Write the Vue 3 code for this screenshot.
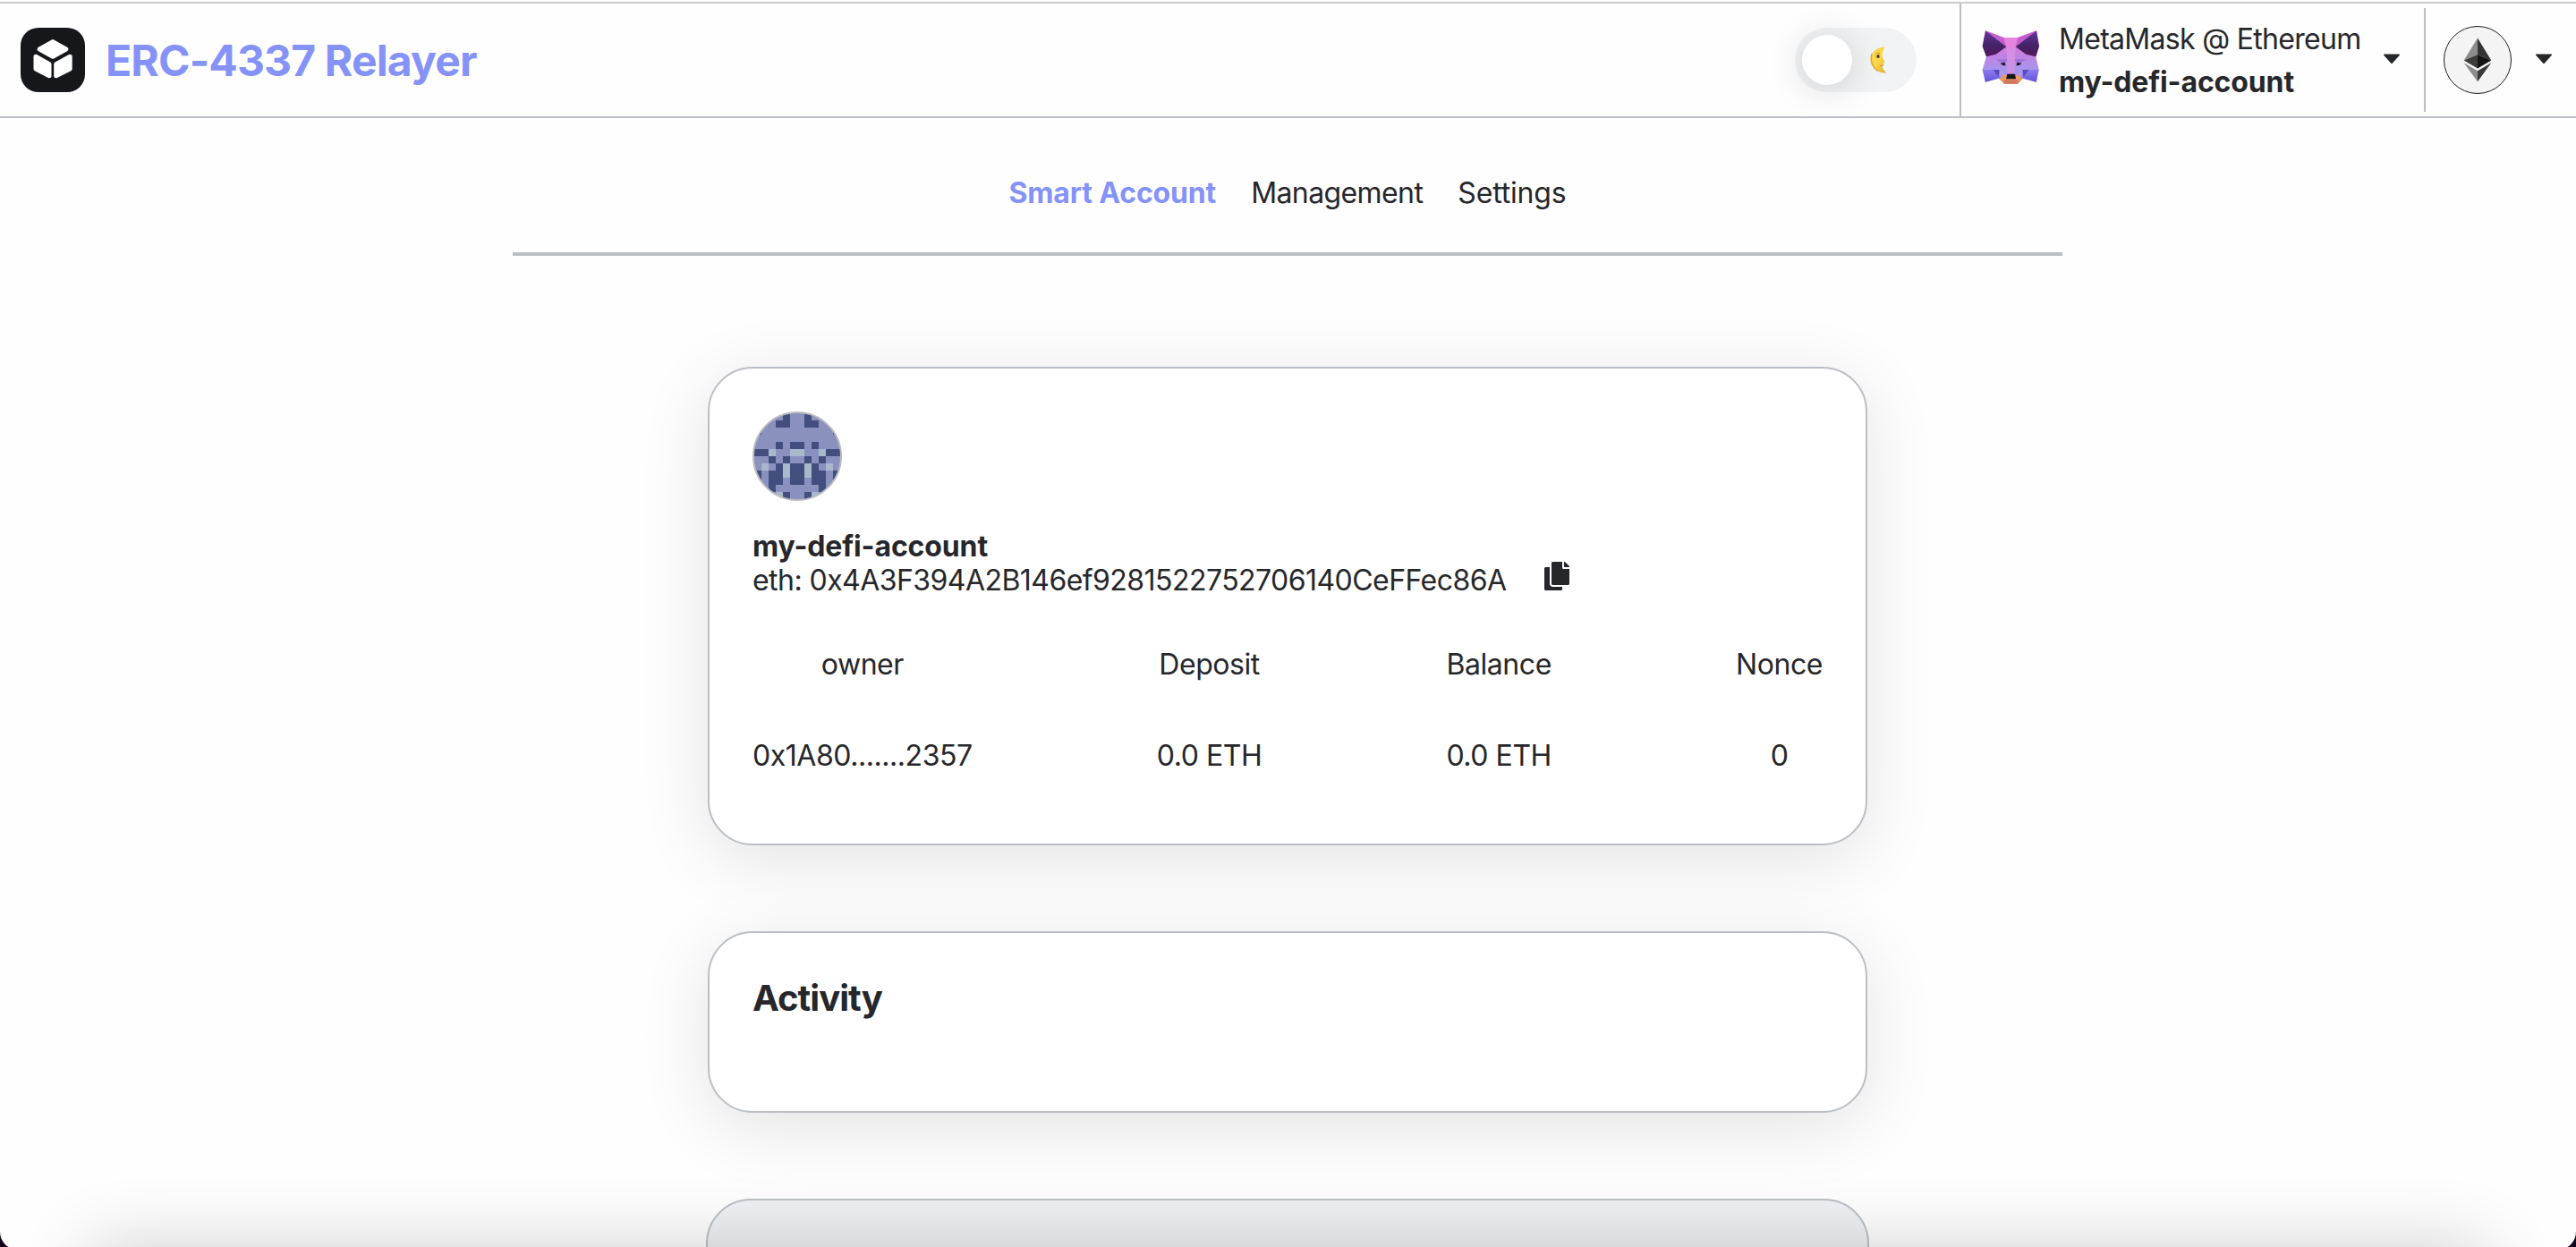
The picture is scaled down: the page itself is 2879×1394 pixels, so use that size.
<script setup>
const tabs = [
  { label: 'Smart Account', key: 'smart' },
  { label: 'Management', key: 'management' },
  { label: 'Settings', key: 'settings' },
]

const stats = [
  { label: 'owner', value: '0x1A80.......2357' },
  { label: 'Deposit', value: '0.0 ETH' },
  { label: 'Balance', value: '0.0 ETH' },
  { label: 'Nonce', value: '0' },
]

// Left half of the identicon; d = dark, l = light, . = base colour
const half = [
  '....d.', '...dd.', 'd.....', '......', '...d.d', 'ddl..l',
  '..d.d.', '.l.dld', 'd.ddld', 'd.dd.d', '..d...', '...ld.',
]
const cells = half.flatMap((row, y) =>
  [...row, ...[...row].reverse()]
    .map((c, x) => ({ c, x, y }))
    .filter((p) => p.c !== '.')
)
</script>

<template>
  <div class="window">
    <div class="page">
      <header class="header">
        <div class="brand">
          <svg class="logo" viewBox="0 0 72 72">
            <rect width="72" height="72" rx="20" fill="#15171a" />
            <g fill="#fff" stroke="#fff" stroke-width="5" stroke-linejoin="round">
              <path d="M36 15.600 L50.800 24 L36 32.200 L21.200 24Z" />
              <path d="M17 32.300 L32 40.800 V53.800 L17 46Z" />
              <path d="M55.200 32.300 L39.700 40.800 V53.800 L55.200 46Z" />
            </g>
          </svg>
          <h1 class="title">ERC-4337 Relayer</h1>
        </div>
        <div class="toggle">
          <span class="knob"></span>
          <svg class="moon" viewBox="0 0 20 30">
            <defs>
              <linearGradient id="moon" x1="0" y1="0" x2="1" y2="1">
                <stop offset="0" stop-color="#f5cf4a" />
                <stop offset=".5" stop-color="#fbd84a" />
                <stop offset="1" stop-color="#d9a534" />
              </linearGradient>
            </defs>
            <path d="M17 .5 C7 .5 .5 7 .5 15 C.5 23.500 8 30 18.500 29.500 C15.500 27.500 13.800 24.500 13.800 22 L15.300 21 L14.700 19.500 L15.200 18 L16.500 17 L14 12.500 C13.500 8 14 4 17 .5Z" fill="url(#moon)" />
            <path d="M2 8 C0 15 2 23 9 27.500" fill="none" stroke="#d3a02f" stroke-width="1.200" />
            <ellipse cx="9" cy="11" rx="1.700" ry="2.100" fill="#4b3512" />
            <path d="M6.500 8 Q8.500 6 11 7.500 M11.500 21.500 Q13 22 14.500 21.200" fill="none" stroke="#b5852a" stroke-width=".9" />
          </svg>
        </div>
        <div class="wallet">
          <svg class="fox" viewBox="45 42 192 180">
            <defs>
              <linearGradient id="face" x1="0" y1="0" x2="0" y2="1">
                <stop offset="0" stop-color="#e97fdc" />
                <stop offset=".45" stop-color="#c281e0" />
                <stop offset=".75" stop-color="#a596ee" />
                <stop offset="1" stop-color="#7a6ae6" />
              </linearGradient>
              <linearGradient id="ear" x1="0" y1="0" x2="0" y2="1">
                <stop offset="0" stop-color="#6b36a0" />
                <stop offset=".55" stop-color="#432368" />
                <stop offset="1" stop-color="#54175a" />
              </linearGradient>
              <linearGradient id="cheek" x1="0" y1="0" x2="0" y2="1">
                <stop offset="0" stop-color="#8f7cf0" />
                <stop offset="1" stop-color="#5f55da" />
              </linearGradient>
            </defs>
            <path d="M57 43 L118 66 H165 L228 43 L237 95 L226 130 L236 173 L227 215 L180 203 L165 221 H120 L103 203 L57 215 L47 173 L60 130 L47 95Z" fill="url(#face)" />
            <path d="M57 43 L118 66 L127 97Z" fill="#c35fd3" />
            <path d="M228 43 L165 66 L158 97Z" fill="#c35fd3" />
            <path d="M118 66 H165 L158 97 L155 140 H130 L127 97Z" fill="#e783dc" />
            <path d="M57 43 L127 97 L92 122 L60 130 L47 95Z" fill="url(#ear)" />
            <path d="M228 43 L158 97 L193 122 L226 130 L237 95Z" fill="url(#ear)" />
            <path d="M130 100 H155 L158 188 H127Z" fill="#cf91e4" opacity=".8" />
            <path d="M92 139 H130 L122 158 Z M193 139 H155 L163 158Z" fill="#a070d8" />
            <path d="M47 174 H86 L104 200 L57 215Z M236 174 H199 L181 200 L227 215Z" fill="url(#cheek)" />
            <path d="M82 174 H104 L101 197Z M203 174 H181 L184 197Z" fill="#5b49bd" />
            <path d="M104 174 L127 188 V206 L108 203Z M181 174 L158 188 V206 L177 203Z" fill="#a99af0" />
            <path d="M118 191 L103 205 L120 221 H165 L182 205 L167 191Z" fill="#ee9b62" />
            <path d="M116 208 H169 L165 221 H120Z" fill="#d17a5f" />
            <path d="M130 188 H156 L159 205 H126Z" fill="#16171a" />
            <path d="M106 153 L121 149 L125 160 L116 159Z M179 153 L164 149 L160 160 L169 159Z" fill="#19151f" />
          </svg>
          <div class="wallet-text">
            <div class="provider">MetaMask @ Ethereum</div>
            <strong class="account-name">my-defi-account</strong>
          </div>
          <svg class="caret" viewBox="0 0 20 12"><path d="M1.500 .5 H18.500 Q19.500 1 18.800 1.800 L11 10.500 Q10 11.500 9 10.500 L1.200 1.800 Q.5 1 1.500 .5Z" /></svg>
        </div>
        <div class="network">
          <svg class="eth" viewBox="0 0 76 76">
            <circle cx="38" cy="38" r="37.500" fill="#f4f4f4" stroke="#1c1c1e" />
            <path d="M38 13.500 L22.700 38.500 L38 32Z" fill="#8c8c8c" />
            <path d="M38 13.500 L53.300 38.500 L38 32Z" fill="#343434" />
            <path d="M22.700 38.500 L38 32 V47.500Z" fill="#3c3c3b" />
            <path d="M53.300 38.500 L38 32 V47.500Z" fill="#141414" />
            <path d="M22.700 41.300 L38 50.300 V62.200Z" fill="#8c8c8c" />
            <path d="M53.300 41.300 L38 50.300 V62.200Z" fill="#393939" />
          </svg>
          <svg class="caret" viewBox="0 0 20 12"><path d="M1.500 .5 H18.500 Q19.500 1 18.800 1.800 L11 10.500 Q10 11.500 9 10.500 L1.200 1.800 Q.5 1 1.500 .5Z" /></svg>
        </div>
      </header>

      <div class="body">
        <nav class="tabs">
          <a v-for="t in tabs" :key="t.key" :class="t.key">{{ t.label }}</a>
        </nav>

        <main class="content">
          <section class="card account">
            <svg class="avatar" viewBox="0 0 100 100">
              <defs><clipPath id="round"><circle cx="50" cy="50" r="49" /></clipPath></defs>
              <g clip-path="url(#round)">
                <rect width="100" height="100" fill="#8a91bf" />
                <rect
                  v-for="p in cells" :key="p.x + '-' + p.y"
                  :x="2 + p.x * 8" :y="2 + p.y * 8" width="8" height="8"
                  :fill="p.c === 'd' ? '#434e7e' : '#a9b8cb'"
                />
              </g>
              <circle cx="50" cy="50" r="49" fill="none" stroke="#b9bcc0" stroke-width="2" />
            </svg>
            <strong class="account-name name">my-defi-account</strong>
            <div class="address">
              <span class="hex">eth: 0x4A3F394A2B146ef9281522752706140CeFFec86A</span>
              <svg class="copy" viewBox="0 0 448 512">
                <path d="M320 448v40c0 13.255-10.745 24-24 24H24c-13.255 0-24-10.745-24-24V120c0-13.255 10.745-24 24-24h72v296c0 30.879 25.121 56 56 56h168zm0-344V0H152c-13.255 0-24 10.745-24 24v368c0 13.255 10.745 24 24 24h272c13.255 0 24-10.745 24-24V128H344c-13.200 0-24-10.800-24-24zm120.971-31.029L375.029 7.029A24 24 0 0 0 358.059 0H352v96h96v-6.059a24 24 0 0 0-7.029-16.970z" />
              </svg>
            </div>
            <div class="stats">
              <div v-for="s in stats" :key="s.label" class="stat">
                <span>{{ s.label }}</span>
                <span>{{ s.value }}</span>
              </div>
            </div>
          </section>

          <section class="card activity">
            <h2>Activity</h2>
          </section>

          <section class="card next"></section>
        </main>
      </div>
      <div class="dock-shadow"></div>
    </div>
  </div>
</template>

<style>
body {
  margin: 0;
  background: #12001a;
}
</style>

<style scoped>
.window {
  height: 1394px;
  overflow: hidden;
  background: #12001a;
  font-family: Inter, "Liberation Sans", sans-serif;
  font-feature-settings: "calt" 0;
  font-size: 32px;
  line-height: 38px;
  letter-spacing: -0.45px;
  color: #26272b;
}
.page {
  position: relative;
  box-sizing: border-box;
  height: 1397px;
  padding-top: 2px;
  overflow: hidden;
  border-radius: 0 0 20px 20px;
  background: #fefefe;
}
.header {
  display: flex;
  align-items: center;
  box-sizing: border-box;
  height: 130px;
  border-top: 2px solid #ccc;
  border-bottom: 2px solid #bbbfc5;
}
.brand {
  display: flex;
  align-items: center;
  flex: 1;
  padding-left: 23px;
}
.logo {
  width: 72px;
  height: 72px;
}
.title {
  margin: 2px 0 0 23px;
  font-size: 48px;
  line-height: 58px;
  letter-spacing: -0.84px;
  color: #8592f8;
}
.toggle {
  display: flex;
  align-items: center;
  box-sizing: border-box;
  width: 136px;
  height: 72px;
  padding-left: 8px;
  margin-right: 48px;
  border-radius: 36px;
  background: #f2f3f5;
}
.knob {
  width: 56px;
  height: 56px;
  border-radius: 50%;
  background: #fff;
  box-shadow: 0 4px 40px rgba(0, 0, 0, 0.16);
}
.moon {
  width: 20px;
  height: 30px;
  margin-left: 20px;
}
.wallet {
  display: flex;
  align-items: center;
  box-sizing: border-box;
  width: 519px;
  height: 126px;
  padding-left: 23px;
  border-left: 2px solid #bbbfc5;
}
.fox {
  width: 64px;
  height: 60px;
  margin-bottom: 6px;
}
.wallet-text {
  width: 361px;
  margin: 2px 0 0 22px;
  line-height: 48px;
  white-space: nowrap;
}
.provider {
  letter-spacing: -0.7px;
}
.account-name {
  display: block;
  letter-spacing: -0.13px;
}
.caret {
  width: 20px;
  height: 12px;
  margin-left: 1px;
  margin-bottom: 3px;
  fill: #26272b;
}
.network {
  display: flex;
  align-items: center;
  box-sizing: border-box;
  width: 170px;
  height: 116px;
  padding-left: 20px;
  border-left: 2px solid #bbbfc5;
}
.eth {
  width: 76px;
  height: 76px;
  margin-right: 25px;
}
.body {
  width: 2878px;
}
.tabs {
  display: flex;
  justify-content: center;
  gap: 39px;
  box-sizing: border-box;
  width: 1732px;
  height: 154px;
  margin: 0 auto;
  padding-top: 65px;
  border-bottom: 4px solid #bbbfc5;
}
.smart {
  font-weight: 700;
  letter-spacing: -0.15px;
  color: #8592f8;
}
.management {
  letter-spacing: -0.6px;
}
.settings {
  letter-spacing: -0.15px;
}
.content {
  display: flex;
  flex-direction: column;
  align-items: center;
  gap: 96px;
  padding-top: 124px;
}
.card {
  flex: none;
  box-sizing: border-box;
  width: 1296px;
  padding: 48px;
  border: 2px solid #bbbfc5;
  border-radius: 50px;
  background: #fff;
  box-shadow: 0 16px 80px rgba(0, 0, 0, 0.11);
}
.account {
  height: 535px;
}
.avatar {
  display: block;
  width: 100px;
  height: 100px;
}
.name {
  margin-top: 32px;
}
.address {
  display: flex;
  align-items: flex-start;
  white-space: nowrap;
}
.hex {
  width: 885px;
  letter-spacing: -0.55px;
}
.copy {
  width: 28px;
  height: 32px;
  margin-top: -2px;
  fill: #26272b;
}
.stats {
  display: flex;
  justify-content: space-between;
  margin-top: 56px;
}
.stat {
  display: flex;
  flex-direction: column;
  align-items: center;
  gap: 64px;
}
.activity {
  height: 203px;
}
.activity h2 {
  margin: 1px 0 0;
  font-size: 40px;
  line-height: 48px;
  letter-spacing: -0.95px;
}
.next {
  width: 1300px;
  height: 200px;
  background: #eff0f4;
  box-shadow: none;
}
.dock-shadow {
  position: absolute;
  top: 1394px;
  left: 100px;
  right: 100px;
  height: 200px;
  box-shadow: 0 0 80px rgba(0, 0, 0, 0.19);
}
</style>
